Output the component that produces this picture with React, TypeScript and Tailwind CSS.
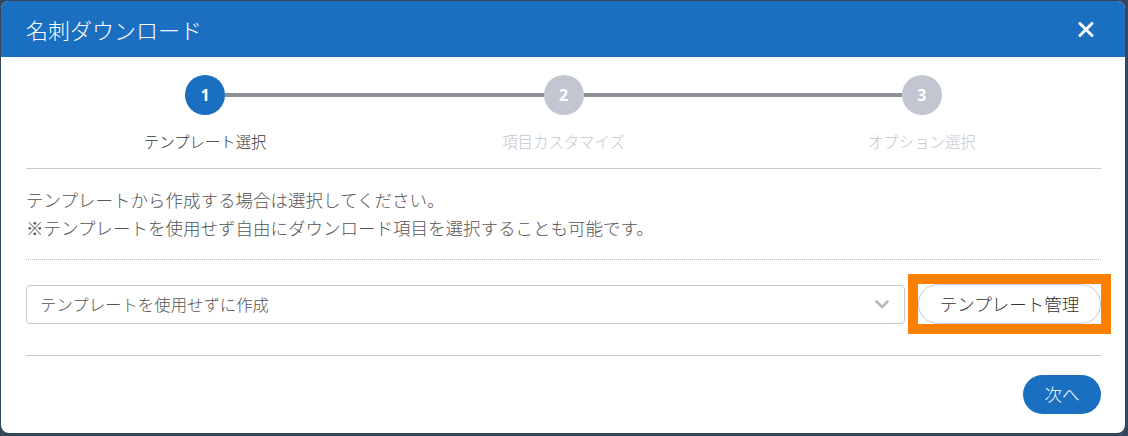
import React from 'react';

const JP = { fontFamily: '"Noto Sans CJK JP", "Noto Sans", sans-serif' };

const steps = [
    { no: 1, label: 'テンプレート選択' },
    { no: 2, label: '項目カスタマイズ' },
    { no: 3, label: 'オプション選択' },
];

const Stepper: React.FC<{ current: number }> = ({ current }) => (
    <div className="grid grid-cols-3">
        {steps.map((s, i) => {
            const active = s.no === current;
            return (
                <div key={s.no} className="flex flex-col items-center">
                    <div className="flex items-center w-full">
                        <div className={`flex-1 h-[4px] ${i === 0 ? '' : 'bg-[#8f9097]'}`} />
                        <div
                            className={`w-10 h-10 rounded-full flex items-center justify-center text-white text-[16px] font-bold ${
                                active ? 'bg-[#1b6fc1]' : 'bg-[#c1c6d0]'
                            }`}
                            style={{ fontFamily: '"Open Sans", "Liberation Sans", sans-serif' }}
                        >
                            {s.no}
                        </div>
                        <div className={`flex-1 h-[4px] ${i === steps.length - 1 ? '' : 'bg-[#8f9097]'}`} />
                    </div>
                    <div
                        className={`mt-[15px] text-[15.4px] leading-[22px] font-light ${active ? 'text-[#333]' : 'text-[#c3c6cd]'}`}
                    >
                        {s.label}
                    </div>
                </div>
            );
        })}
    </div>
);

export default function App() {
    return (
        <div className="w-[1128px] h-[436px] bg-[#34465c] pl-[1px] pt-[1px]" style={JP}>
            <div className="w-[1124px] h-[432px] bg-white rounded-[8px] overflow-hidden flex flex-col">

                {/* ── Header ── */}
                <header className="h-[56px] bg-[#1b6fc1] flex items-center justify-between pl-[25px] pr-[31px]">
                    <h1 className="text-white text-[22px] leading-none font-light">名刺ダウンロード</h1>
                    <button className="text-white">
                        <svg width="16" height="15" viewBox="0 0 16 15">
                            <path d="M2 1.5 L14 13.5 M14 1.5 L2 13.5" stroke="#fff" strokeWidth="3" strokeLinecap="round" />
                        </svg>
                    </button>
                </header>

                <div className="pl-[25px] pr-[24px] flex-1 flex flex-col">
                    {/* ── Steps ── */}
                    <div className="pt-[18px] pb-[16px] border-b border-[#c8c8cd]">
                        <Stepper current={1} />
                    </div>

                    {/* ── Description ── */}
                    <div className="pt-[17px] pb-[17px] border-b border-dotted border-[#b9b9bd] text-[17.5px] leading-[28px] text-[#555] font-light">
                        <p>テンプレートから作成する場合は選択してください。</p>
                        <p>※テンプレートを使用せず自由にダウンロード項目を選択することも可能です。</p>
                    </div>

                    {/* ── Template select ── */}
                    <div className="pt-[24px] pb-[31px] border-b border-[#c8c8cd] flex items-center gap-[13px]">
                        <div className="w-[879px] h-[39px] border border-[#c8c8cd] rounded-[4px] flex items-center justify-between pl-[13px] pr-[15px]">
                            <span className="text-[16.4px] text-[#555] font-light">テンプレートを使用せずに作成</span>
                            <svg width="14" height="9" viewBox="0 0 14 9">
                                <path d="M1.5 1.5 L7 7 L12.5 1.5" fill="none" stroke="#b6bac2" strokeWidth="2.6" strokeLinecap="round" strokeLinejoin="round" />
                            </svg>
                        </div>
                        <div className="relative">
                            <button className="w-[183px] h-[40px] rounded-full border border-[#c8c8cd] bg-white text-[17.5px] text-[#333] font-light">
                                テンプレート管理
                            </button>
                            <span className="absolute -inset-[10px] border-[10px] border-[#ff8000] pointer-events-none" />
                        </div>
                    </div>

                    {/* ── Footer ── */}
                    <div className="flex justify-end pt-[19px]">
                        <button className="w-[78px] h-[39px] rounded-full bg-[#1b6fc1] text-white text-[17.5px] font-light">
                            次へ
                        </button>
                    </div>
                </div>
            </div>
        </div>
    );
}
